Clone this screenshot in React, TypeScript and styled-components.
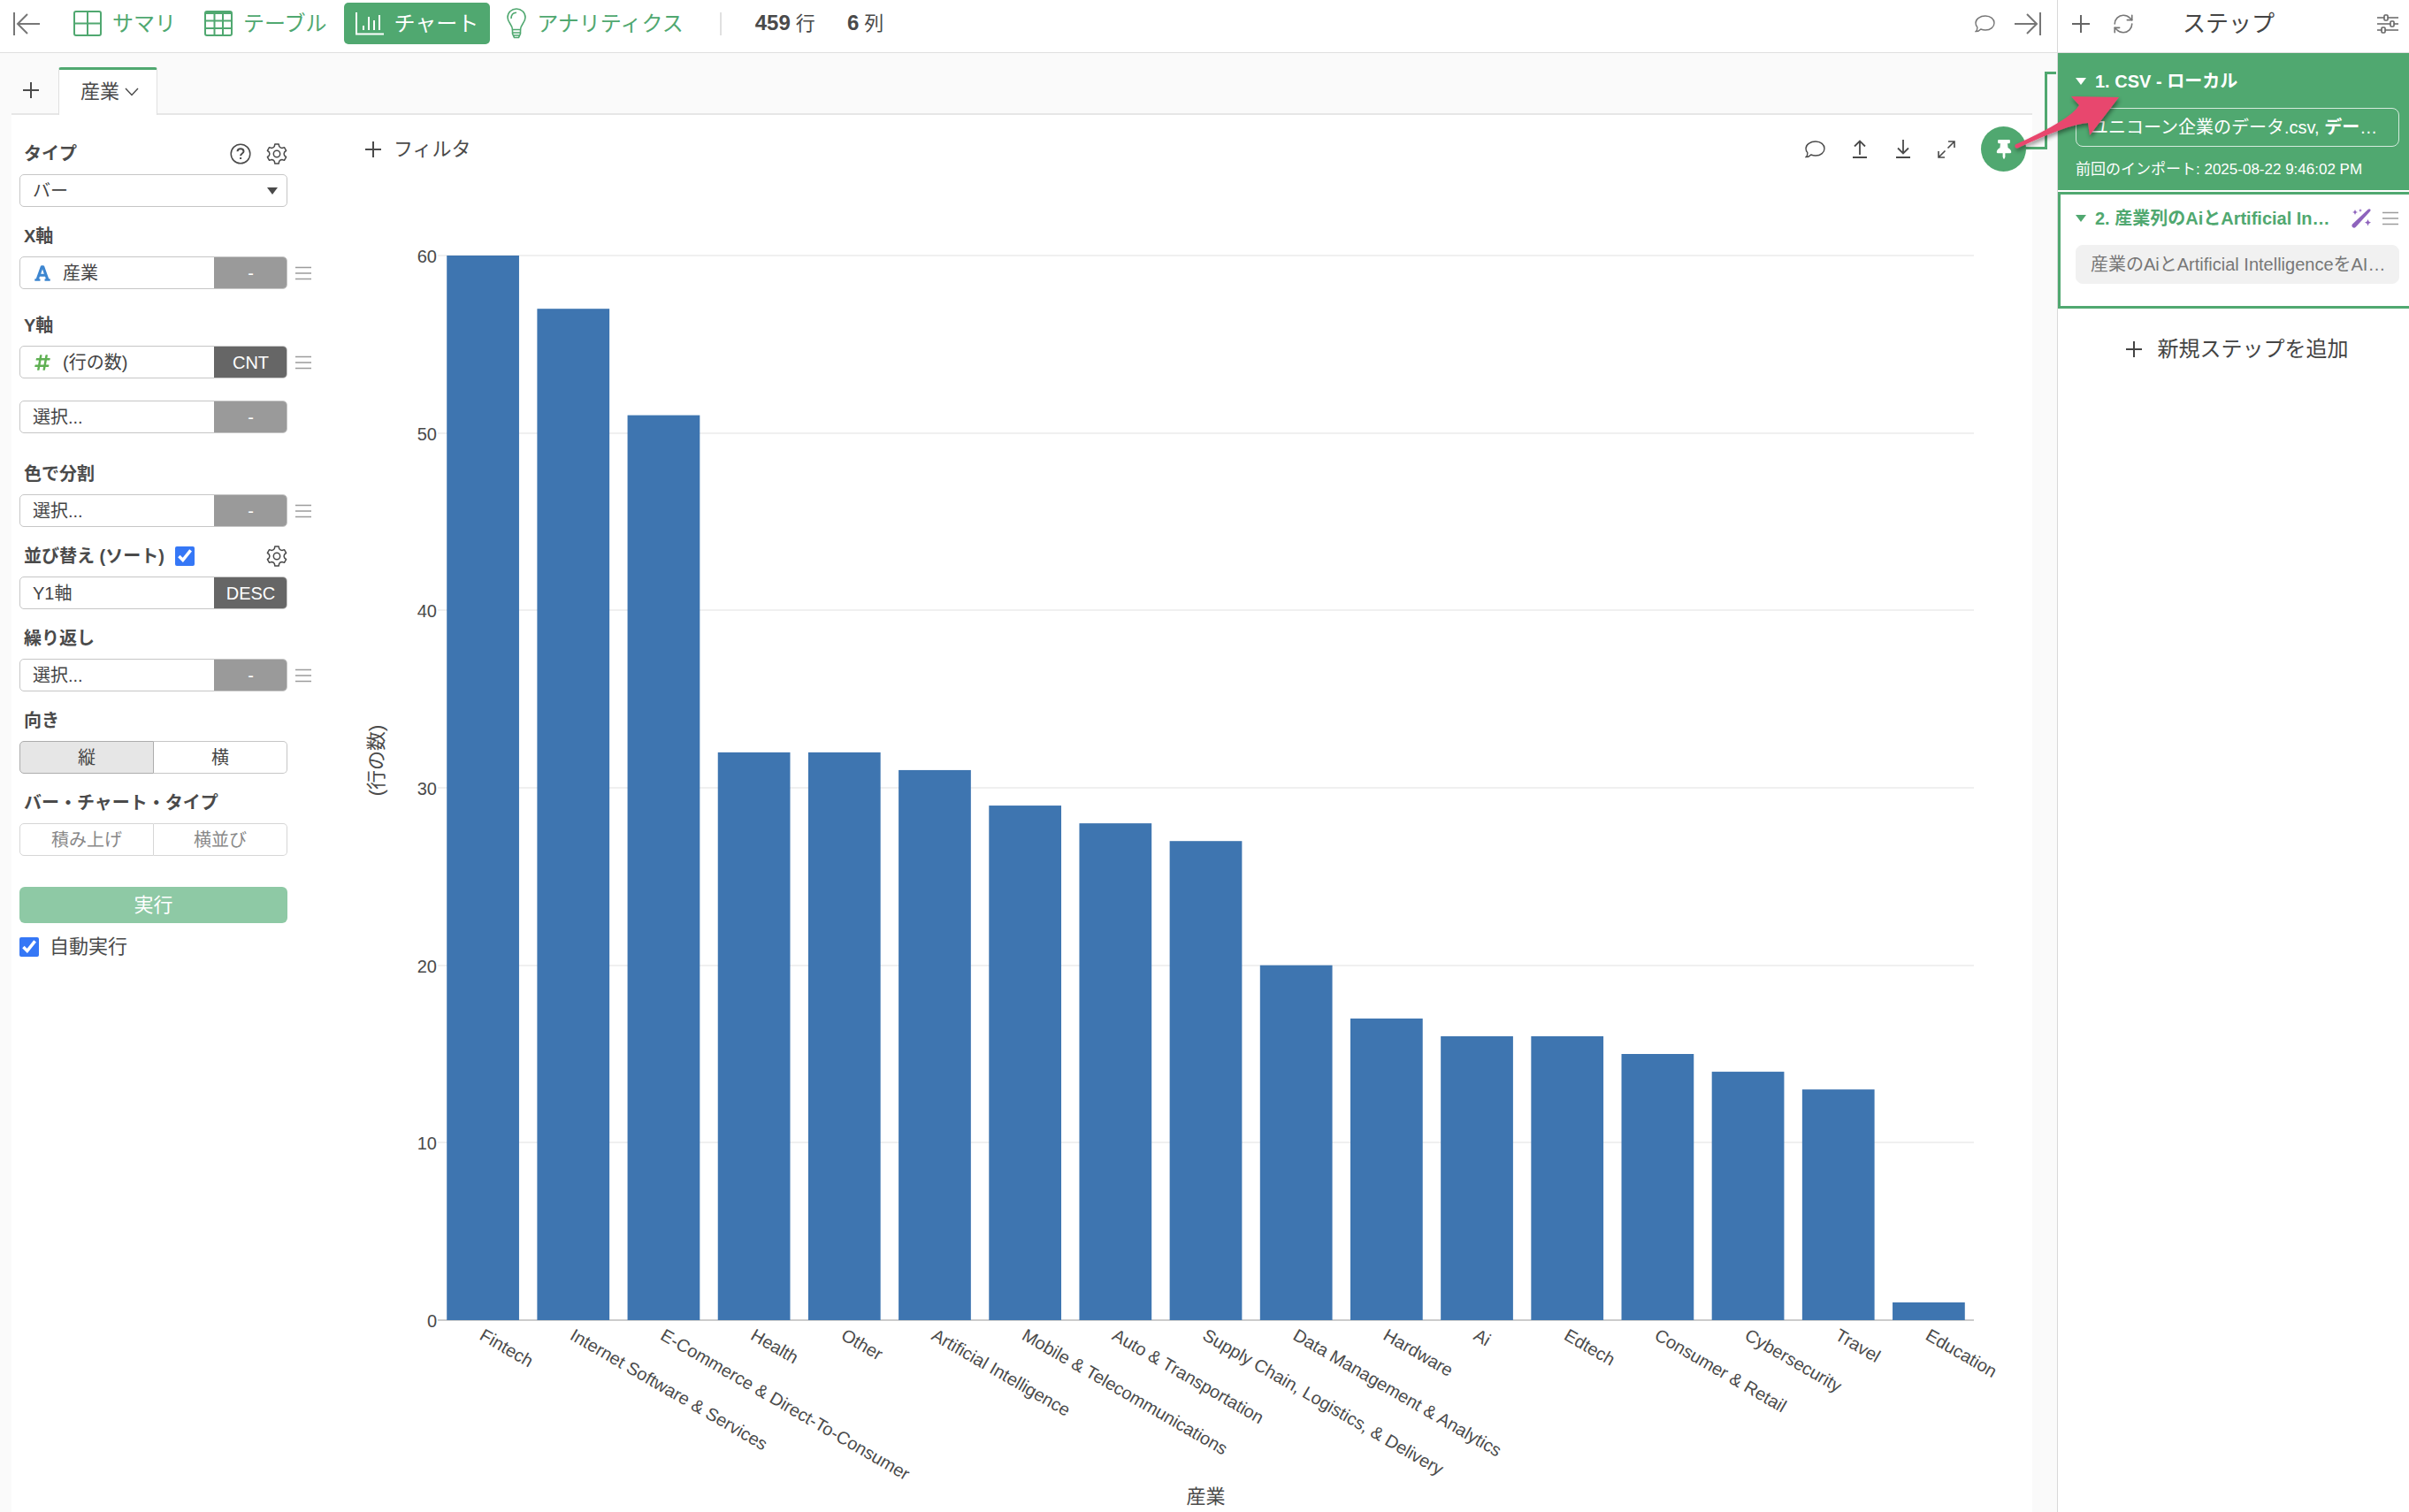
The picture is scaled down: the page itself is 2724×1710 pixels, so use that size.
import React, { useLayoutEffect, useRef, useState } from "react";
import styled, { createGlobalStyle } from "styled-components";
import { RefreshCw } from "lucide-react";
import { FaFont, FaHashtag, FaThumbtack } from "react-icons/fa";

const green = "#50a870";
const ink = "#4a4a4a";
const line = "#e0e0e0";

const GlobalStyle = createGlobalStyle`
  *, *::before, *::after { box-sizing: border-box; }
  body {
    margin: 0;
    background: #fff;
    color: ${ink};
    font-family: "Liberation Sans", "Noto Sans CJK JP", sans-serif;
    font-size: 20px;
    line-height: 24px;
  }
  button, select, input { font: inherit; color: inherit; }
  button { background: none; border: 0; padding: 0; cursor: pointer; }
  svg { display: block; flex: none; }
`;

/* ---------- page frame ---------- */

const Page = styled.div`
  display: grid;
  grid-template-columns: minmax(0, 1fr) 398px;
  min-height: 100vh;
`;

const Main = styled.main`
  display: flex;
  flex-direction: column;
  min-width: 0;
`;

const Header = styled.header`
  display: flex;
  align-items: center;
  height: 60px;
  padding: 0 18px 6px 14px;
  border-bottom: 1px solid ${line};
`;

const Nav = styled.nav`
  display: flex;
  gap: 6px;
  margin-left: 24px;
`;

const NavButton = styled.button<{ $active?: boolean }>`
  display: flex;
  align-items: center;
  gap: 12px;
  height: 47px;
  padding: 0 13px;
  border-radius: 5px;
  font-size: 24px;
  white-space: nowrap;
  color: ${(p) => (p.$active ? "#fff" : green)};
  background: ${(p) => (p.$active ? green : "transparent")};
`;

const Counts = styled.div`
  display: flex;
  align-items: center;
  gap: 36px;
  height: 26px;
  margin-left: 28px;
  padding-left: 38px;
  border-left: 2px solid ${line};
  font-size: 22px;
  white-space: nowrap;
  b { font-size: 24px; }
`;

const HeaderEnd = styled.div`
  display: flex;
  align-items: center;
  gap: 22px;
  margin-left: auto;
  color: #777;
`;

const Workspace = styled.div`
  flex: 1;
  display: flex;
  flex-direction: column;
  padding: 0 28px 0 13px;
  background: #fafafa;
`;

const TabBar = styled.div`
  display: flex;
  align-items: flex-end;
  height: 70px;
  border-bottom: 2px solid #e6e6e6;
`;

const AddTab = styled.button`
  display: flex;
  align-items: center;
  width: 53px;
  height: 52px;
  padding-left: 13px;
`;

const Tab = styled.button`
  display: flex;
  align-items: center;
  gap: 6px;
  height: 54px;
  margin-bottom: -2px;
  padding: 0 20px 2px 24px;
  border: 1px solid ${line};
  border-top: 3px solid ${green};
  border-bottom: 0;
  border-radius: 3px 3px 0 0;
  background: #fff;
  font-size: 22px;
`;

const Panel = styled.div`
  flex: 1;
  display: grid;
  grid-template-columns: 382px minmax(0, 1fr);
  background: #fff;
`;

/* ---------- settings form ---------- */

const Form = styled.form`
  padding: 32px 0 40px 9px;
`;

const Group = styled.div<{ $space?: number }>`
  margin-top: ${(p) => p.$space ?? 21}px;
  &:first-child { margin-top: 0; }
`;

const LabelRow = styled.div`
  display: flex;
  align-items: center;
  gap: 17px;
  width: 303px;
  height: 24px;
  margin-bottom: 11px;
  padding: 0 0 0 5px;
`;

const Label = styled.label`
  margin-right: auto;
  font-weight: 700;
`;

const SortLabel = styled.div`
  display: flex;
  align-items: center;
  gap: 12px;
  margin-right: auto;
  font-weight: 700;
  white-space: nowrap;
`;

const IconButton = styled.button<{ $muted?: boolean }>`
  display: flex;
  align-items: center;
  color: ${(p) => (p.$muted ? "#777" : "inherit")};
`;

const Row = styled.div<{ $space?: number }>`
  display: flex;
  align-items: center;
  gap: 8px;
  margin-top: ${(p) => p.$space ?? 0}px;
`;

const Field = styled.div`
  display: flex;
  width: 303px;
  height: 37px;
  border: 1px solid #c6c6c6;
  border-radius: 5px;
  background: #fff;
  overflow: hidden;
`;

const ValueBox = styled.div`
  flex: 1;
  display: flex;
  align-items: center;
  gap: 13px;
  min-width: 0;
  padding: 0 10px 0 14px;
`;

const FieldIcon = styled.span`
  display: flex;
  justify-content: flex-end;
  width: 21px;
`;

const PlainSelect = styled.select`
  appearance: none;
  flex: 1;
  min-width: 0;
  height: 100%;
  padding: 0;
  border: 0;
  outline: 0;
  background: transparent;
  color: #444;
`;

const Aggregate = styled.button<{ $set?: boolean }>`
  width: 83px;
  margin: -1px -1px -1px 0;
  background: ${(p) => (p.$set ? "#666" : "#9a9a9a")};
  color: #fff;
`;

const MenuButton = styled(IconButton)`
  color: #9c9c9c;
`;

const Segments = styled.div`
  display: flex;
  width: 303px;
  height: 37px;
`;

const Segment = styled.button<{ $on?: boolean }>`
  flex: 1;
  border: 1px solid ${(p) => (p.$on ? "#adadad" : "#c6c6c6")};
  background: ${(p) => (p.$on ? "#e6e6e6" : "#fff")};
  color: #444;
  &:first-child { border-radius: 5px 0 0 5px; }
  &:last-child { border-radius: 0 5px 5px 0; border-left: 0; }
  &:disabled { color: #888; border-color: #d6d6d6; cursor: default; }
`;

const RunButton = styled.button`
  display: block;
  width: 303px;
  height: 41px;
  margin-top: 35px;
  border-radius: 6px;
  background: #8ec9a5;
  color: #fff;
  font-size: 22px;
`;

const Check = styled.input`
  width: 22px;
  height: 22px;
  margin: 0;
  accent-color: #3577f6;
`;

const AutoRun = styled.label`
  display: flex;
  align-items: center;
  gap: 12px;
  margin-top: 15px;
  font-size: 22px;
`;

/* ---------- chart ---------- */

const ChartColumn = styled.section`
  display: flex;
  flex-direction: column;
  min-width: 0;
`;

const ChartBar = styled.div`
  display: flex;
  align-items: center;
  margin-top: 13px;
  padding: 0 7px 0 18px;
`;

const FilterButton = styled.button`
  display: flex;
  align-items: center;
  gap: 14px;
  font-size: 22px;
`;

const ChartTools = styled.div`
  display: flex;
  align-items: center;
  gap: 29px;
  margin-left: auto;
`;

const PinWrap = styled.div`
  position: relative;
  z-index: 2;
`;

const PinButton = styled.button`
  display: grid;
  place-items: center;
  width: 51px;
  height: 51px;
  border-radius: 50%;
  background: ${green};
  color: #fff;
`;

const PinLink = styled.svg`
  position: absolute;
  left: 0;
  top: -83px;
  pointer-events: none;
`;

const ChartSvg = styled.svg`
  flex: 1;
  width: 100%;
  min-height: 900px;
  font-size: 20px;
  fill: ${ink};
`;

/* ---------- steps ---------- */

const Steps = styled.aside`
  border-left: 1px solid #d9d9d9;
  background: #fff;
`;

const StepsHeader = styled.header`
  display: flex;
  align-items: center;
  height: 60px;
  padding: 0 12px 6px 16px;
  border-bottom: 1px solid ${line};
  color: #666;
`;

const StepsTitle = styled.h2`
  flex: 1;
  margin: 0 0 0 54px;
  font-size: 26px;
  font-weight: 400;
  color: #444;
`;

const RefreshButton = styled(IconButton)`
  margin-left: 25px;
  color: #777;
`;

const Step = styled.section<{ $source?: boolean }>`
  padding: ${(p) => (p.$source ? "18px 11px 11px 20px" : "13px 11px 25px 17px")};
  border: solid ${(p) => (p.$source ? "#fff" : green)};
  border-width: ${(p) => (p.$source ? "0 0 2px" : "3px 0 3px 3px")};
  background: ${(p) => (p.$source ? green : "#fff")};
  color: ${(p) => (p.$source ? "#fff" : green)};
`;

const StepHead = styled.div`
  display: flex;
  align-items: center;
  gap: 10px;
  height: 28px;
  margin-bottom: 16px;
`;

const StepTitle = styled.h3`
  flex: 1;
  margin: 0;
  font-size: 20px;
  white-space: nowrap;
`;

const StepTools = styled.div`
  display: flex;
  align-items: center;
  gap: 12px;
`;

const StepBox = styled.button<{ $source?: boolean }>`
  display: block;
  width: 100%;
  height: 44px;
  padding: 0 0 0 16px;
  border: 1px solid ${(p) => (p.$source ? "#d5ebdd" : "#f1f1f1")};
  border-radius: 8px;
  background: ${(p) => (p.$source ? "transparent" : "#f1f1f1")};
  color: ${(p) => (p.$source ? "#fff" : "#777")};
  text-align: left;
  white-space: nowrap;
`;

const Imported = styled.p`
  margin: 14px 0 0;
  font-size: 17px;
  white-space: nowrap;
`;

const AddStep = styled.button`
  display: flex;
  align-items: center;
  justify-content: center;
  gap: 18px;
  width: 100%;
  margin-top: 30px;
  padding-left: 8px;
  font-size: 24px;
  line-height: 32px;
  color: #444;
`;

/* ---------- icons ---------- */

type Stroke = { w: number; h: number; sw?: number; d: string };

const Icon = ({ w, h, sw = 2, d }: Stroke) => (
  <svg width={w} height={h} viewBox={`0 0 ${w} ${h}`} fill="none" stroke="currentColor" strokeWidth={sw} aria-hidden>
    <path d={d} />
  </svg>
);

const Plus = ({ size = 18, sw = 2 }: { size?: number; sw?: number }) => (
  <Icon w={size} h={size} sw={sw} d={`M${size / 2} 0V${size}M0 ${size / 2}H${size}`} />
);

const Lines = () => <Icon w={20} h={16} sw={1.6} d="M1 1.5H19M1 8H19M1 14.5H19" />;

const Bubble = () => (
  <Icon
    w={23}
    h={20}
    sw={1.4}
    d="M12 1C18 1 22 4.600 22 9S18 17 12 17C10 17 8.300 16.600 6.800 16C5.300 17.800 3.300 18.600 1.200 18.600C2.500 17.300 3 15.600 2.800 13.600C1.600 12.300 1 10.800 1 9C1 4.600 6 1 12 1Z"
  />
);

const gearPath = (() => {
  const at = (deg: number, r: number) => {
    const a = (deg * Math.PI) / 180;
    return `${(12 + r * Math.cos(a)).toFixed(2)} ${(12 + r * Math.sin(a)).toFixed(2)}`;
  };
  let d = "";
  for (let k = 0; k < 6; k++) {
    const c = -90 + k * 60;
    d += `${k ? "L" : "M"}${at(c - 18, 8.8)}L${at(c - 11, 11.2)}L${at(c + 11, 11.2)}L${at(c + 18, 8.8)}Q${at(c + 30, 7.6)} ${at(c + 42, 8.8)}`;
  }
  return d + "Z";
})();

const Gear = () => (
  <svg width="24" height="24" viewBox="0 0 24 24" fill="none" stroke="currentColor" strokeWidth="1.5" strokeLinejoin="round" aria-hidden>
    <path d={gearPath} />
    <circle cx="12" cy="12" r="3.7" />
  </svg>
);

const Help = () => (
  <svg width="24" height="24" viewBox="0 0 24 24" fill="none" stroke="currentColor" strokeWidth="1.5" aria-hidden>
    <circle cx="12" cy="12" r="10.8" />
    <path d="M8.500 9.300C8.600 7.400 10 6.300 12 6.300S15.500 7.400 15.500 9.200C15.500 11.500 12.100 11.500 12.100 14.200M12.100 15.900V18" strokeWidth="2" />
  </svg>
);

const SummaryIcon = () => (
  <svg width="32" height="29" viewBox="0 0 32 29" fill="none" stroke="currentColor" strokeWidth="2" aria-hidden>
    <rect x="1" y="1" width="30" height="27" rx="2" />
    <path d="M16 1V28M1 14.500H31" />
  </svg>
);

const TableIcon = () => (
  <svg width="32" height="29" viewBox="0 0 32 29" fill="none" stroke="currentColor" strokeWidth="2" aria-hidden>
    <rect x="1" y="1" width="30" height="27" rx="2" />
    <path d="M11.500 3V28M21 3V28M1 11.500H31M1 20H31" />
    <path d="M1 2.500H31" strokeWidth="3" />
  </svg>
);

const BulbIcon = () => (
  <svg width="22" height="35" viewBox="0 0 22 35" fill="none" stroke="currentColor" strokeWidth="1.6" aria-hidden>
    <path d="M6.500 24.500C6.500 19 1 16.500 1 10.800C1 5 5.500 1 11 1S21 5 21 10.800C21 16.500 15.500 19 15.500 24.500Z" />
    <path d="M6.500 24.500V29L8.500 33.500H13.500L15.500 29V24.500M6.500 28H15.500M7.500 31H14.500M5 12C5 8 7 5.500 11 5.300" />
  </svg>
);

const Caret = () => (
  <svg width="12" height="8" viewBox="0 0 12 8" fill="currentColor" aria-hidden>
    <path d="M0 0H12L6 8Z" />
  </svg>
);

const Wand = () => (
  <svg width="22" height="22" viewBox="0 0 22 22" fill="#8e63bd" aria-hidden>
    <path d="M18.800 0.800Q20.300 -0.300 21.200 0.800T21 3L4.800 20.800Q3 22.400 1.300 21T1 17.600Z" />
    <path d="M4 1L5 3.200L7 4L5 4.800L4 7L3 4.800L1 4L3 3.200ZM10 0L10.600 1.400L12 2L10.600 2.600L10 4L9.400 2.600L8 2L9.400 1.400ZM18.500 12L19.600 14.600L22 15.700L19.600 16.800L18.500 19.400L17.400 16.800L15 15.700L17.400 14.600Z" />
  </svg>
);

const Sliders = () => (
  <svg width="24" height="22" viewBox="0 0 24 22" fill="none" stroke="currentColor" strokeWidth="1.600" aria-hidden>
    <path d="M0 4H8M12 4H24M0 11H15M19 11H24M0 18H5M9 18H24" />
    <rect x="8" y="1" width="4" height="6" rx="1" />
    <rect x="15" y="8" width="4" height="6" rx="1" />
    <rect x="5" y="15" width="4" height="6" rx="1" />
  </svg>
);

/* ---------- data ---------- */

const data: [string, number][] = [
  ["Fintech", 60],
  ["Internet Software & Services", 57],
  ["E-Commerce & Direct-To-Consumer", 51],
  ["Health", 32],
  ["Other", 32],
  ["Artificial Intelligence", 31],
  ["Mobile & Telecommunications", 29],
  ["Auto & Transportation", 28],
  ["Supply Chain, Logistics, & Delivery", 27],
  ["Data Management & Analytics", 20],
  ["Hardware", 17],
  ["Ai", 16],
  ["Edtech", 16],
  ["Consumer & Retail", 15],
  ["Cybersecurity", 14],
  ["Travel", 13],
  ["Education", 1],
];

const margin = { left: 100, right: 66, top: 95, bottom: 217 };

function BarChart() {
  const ref = useRef<SVGSVGElement>(null);
  const [size, setSize] = useState({ width: 1200, height: 900 });

  useLayoutEffect(() => {
    const el = ref.current!;
    const measure = () => {
      const r = el.getBoundingClientRect();
      setSize({ width: r.width, height: r.height });
    };
    measure();
    const observer = new ResizeObserver(measure);
    observer.observe(el);
    return () => observer.disconnect();
  }, []);

  const plotW = size.width - margin.left - margin.right;
  const plotH = size.height - margin.top - margin.bottom;
  const base = margin.top + plotH;
  const band = plotW / data.length;
  const y = (v: number) => base - (v / 60) * plotH;

  return (
    <ChartSvg ref={ref} role="img" aria-label="産業別の行の数">
      {[0, 10, 20, 30, 40, 50, 60].map((v) => (
        <g key={v}>
          <line
            x1={margin.left}
            x2={margin.left + plotW}
            y1={Math.round(y(v))}
            y2={Math.round(y(v))}
            stroke={v ? "#f0f0f0" : "#cccccc"}
            strokeWidth={2}
          />
          <text x={margin.left - 1} y={y(v) + 8} textAnchor="end">
            {v}
          </text>
        </g>
      ))}
      {data.map(([name, v], i) => {
        const mid = margin.left + band * (i + 0.5);
        return (
          <g key={name}>
            <rect x={mid - band * 0.4} y={y(v)} width={band * 0.8} height={base - y(v)} fill="#3e75b0" />
            <text transform={`translate(${mid - 5} ${base + 21}) rotate(30)`}>{name}</text>
          </g>
        );
      })}
      <text x={margin.left + plotW / 2} y={base + 207} textAnchor="middle" fontSize={22}>
        産業
      </text>
      <text transform={`translate(38 ${margin.top + plotH / 2 - 31}) rotate(-90)`} textAnchor="middle" fontSize={22}>
        (行の数)
      </text>
    </ChartSvg>
  );
}

type ColumnProps = {
  id: string;
  value: string;
  icon?: React.ReactNode;
  agg: string;
  set?: boolean;
  menu?: boolean;
  space?: number;
};

function ColumnField({ id, value, icon, agg, set, menu, space }: ColumnProps) {
  return (
    <Row $space={space}>
      <Field>
        <ValueBox>
          {icon && <FieldIcon>{icon}</FieldIcon>}
          <PlainSelect id={id} aria-label={id}>
            <option>{value}</option>
          </PlainSelect>
        </ValueBox>
        <Aggregate type="button" $set={set}>
          {agg}
        </Aggregate>
      </Field>
      {menu && (
        <MenuButton type="button" aria-label="メニュー">
          <Lines />
        </MenuButton>
      )}
    </Row>
  );
}

export default function App() {
  return (
    <>
      <GlobalStyle />
      <Page>
        <Main>
          <Header>
            <IconButton $muted aria-label="左パネルを閉じる">
              <Icon w={32} h={26} d="M2 0V26M31 13H6M17 2L6 13L17 24" />
            </IconButton>
            <Nav>
              <NavButton><SummaryIcon />サマリ</NavButton>
              <NavButton><TableIcon />テーブル</NavButton>
              <NavButton $active>
                <Icon w={32} h={26} d="M1 0V24.500H32M9 20V15M15 20V5M21 20V9M27 20V3" />
                チャート
              </NavButton>
              <NavButton><BulbIcon />アナリティクス</NavButton>
            </Nav>
            <Counts>
              <span><b>459</b> 行</span>
              <span><b>6</b> 列</span>
            </Counts>
            <HeaderEnd>
              <IconButton aria-label="コメント"><Bubble /></IconButton>
              <IconButton aria-label="右パネルを閉じる">
                <Icon w={30} h={26} d="M29 0V26M0 13H25M14 2L25 13L14 24" />
              </IconButton>
            </HeaderEnd>
          </Header>

          <Workspace>
            <TabBar>
              <AddTab aria-label="タブを追加"><Plus /></AddTab>
              <Tab>
                産業
                <Icon w={16} h={10} sw={1.4} d="M1 1L8 8.500L15 1" />
              </Tab>
            </TabBar>
            <Panel>
              <Form onSubmit={(e) => e.preventDefault()}>
                <Group>
                  <LabelRow>
                    <Label htmlFor="type">タイプ</Label>
                    <IconButton type="button" aria-label="ヘルプ"><Help /></IconButton>
                    <IconButton type="button" aria-label="設定"><Gear /></IconButton>
                  </LabelRow>
                  <Field>
                    <ValueBox>
                      <PlainSelect id="type"><option>バー</option></PlainSelect>
                      <Caret />
                    </ValueBox>
                  </Field>
                </Group>
                <Group>
                  <LabelRow><Label htmlFor="x-axis">X軸</Label></LabelRow>
                  <ColumnField id="x-axis" value="産業" icon={<FaFont size={20} color="#3d86d0" />} agg="-" menu />
                </Group>
                <Group $space={29}>
                  <LabelRow><Label htmlFor="y-axis">Y軸</Label></LabelRow>
                  <ColumnField id="y-axis" value="(行の数)" icon={<FaHashtag size={20} color="#5fb053" />} agg="CNT" set menu />
                  <ColumnField id="y-axis-2" value="選択..." agg="-" space={25} />
                </Group>
                <Group $space={34}>
                  <LabelRow><Label htmlFor="color">色で分割</Label></LabelRow>
                  <ColumnField id="color" value="選択..." agg="-" menu />
                </Group>
                <Group>
                  <LabelRow>
                    <SortLabel>
                      <label htmlFor="sort-on">並び替え (ソート)</label>
                      <Check id="sort-on" type="checkbox" defaultChecked />
                    </SortLabel>
                    <IconButton type="button" aria-label="並び替えの設定"><Gear /></IconButton>
                  </LabelRow>
                  <ColumnField id="sort" value="Y1軸" agg="DESC" set />
                </Group>
                <Group>
                  <LabelRow><Label htmlFor="repeat">繰り返し</Label></LabelRow>
                  <ColumnField id="repeat" value="選択..." agg="-" menu />
                </Group>
                <Group>
                  <LabelRow><Label as="span">向き</Label></LabelRow>
                  <Segments>
                    <Segment type="button" $on aria-pressed="true">縦</Segment>
                    <Segment type="button" aria-pressed="false">横</Segment>
                  </Segments>
                </Group>
                <Group>
                  <LabelRow><Label as="span">バー・チャート・タイプ</Label></LabelRow>
                  <Segments>
                    <Segment type="button" disabled>積み上げ</Segment>
                    <Segment type="button" disabled>横並び</Segment>
                  </Segments>
                </Group>
                <RunButton type="submit">実行</RunButton>
                <AutoRun>
                  <Check type="checkbox" defaultChecked />
                  自動実行
                </AutoRun>
              </Form>

              <ChartColumn>
                <ChartBar>
                  <FilterButton><Plus />フィルタ</FilterButton>
                  <ChartTools>
                    <IconButton aria-label="コメント"><Bubble /></IconButton>
                    <IconButton aria-label="アップロード">
                      <Icon w={20} h={21} d="M2 20H18M10 17V2M4 7.500L10 1.500L16 7.500" sw={1.8} />
                    </IconButton>
                    <IconButton aria-label="ダウンロード">
                      <Icon w={20} h={21} d="M2 20H18M10 0V15M4 9.500L10 15.500L16 9.500" sw={1.8} />
                    </IconButton>
                    <IconButton aria-label="拡大">
                      <Icon w={20} h={20} sw={1.6} d="M12 1H19V8M19 1L11.500 8.500M8.500 11.500L1 19M1 12V19H8" />
                    </IconButton>
                    <PinWrap>
                      <PinButton aria-label="ピン"><FaThumbtack size={22} /></PinButton>
                      <PinLink width="170" height="130" viewBox="0 0 170 130" aria-hidden>
                        <defs>
                          <filter id="shade" x="-20%" y="-20%" width="140%" height="150%">
                            <feDropShadow dx="1" dy="3" stdDeviation="2.500" floodOpacity="0.45" />
                          </filter>
                        </defs>
                        <path d="M50 107.500H73.500V22.500H85" fill="none" stroke={green} strokeWidth="3" />
                        <path
                          d="M156 50L102 49L111 59Q102 75 39 103.500Q37 107 41 107.700Q100 80 121 79L123 93Z"
                          fill="#e8476e"
                          filter="url(#shade)"
                        />
                      </PinLink>
                    </PinWrap>
                  </ChartTools>
                </ChartBar>
                <BarChart />
              </ChartColumn>
            </Panel>
          </Workspace>
        </Main>

        <Steps>
          <StepsHeader>
            <IconButton aria-label="ステップを追加"><Plus size={20} /></IconButton>
            <RefreshButton aria-label="再読み込み"><RefreshCw size={26} strokeWidth={1.5} /></RefreshButton>
            <StepsTitle>ステップ</StepsTitle>
            <IconButton aria-label="表示設定"><Sliders /></IconButton>
          </StepsHeader>
          <Step $source>
            <StepHead>
              <Caret />
              <StepTitle>1. CSV - ローカル</StepTitle>
            </StepHead>
            <StepBox $source>ユニコーン企業のデータ.csv, <b>デー</b>…</StepBox>
            <Imported>前回のインポート: 2025-08-22 9:46:02 PM</Imported>
          </Step>
          <Step>
            <StepHead>
              <Caret />
              <StepTitle>2. 産業列のAiとArtificial In…</StepTitle>
              <StepTools>
                <Wand />
                <MenuButton aria-label="メニュー"><Lines /></MenuButton>
              </StepTools>
            </StepHead>
            <StepBox>産業のAiとArtificial IntelligenceをAI…</StepBox>
          </Step>
          <AddStep><Plus />新規ステップを追加</AddStep>
        </Steps>
      </Page>
    </>
  );
}
